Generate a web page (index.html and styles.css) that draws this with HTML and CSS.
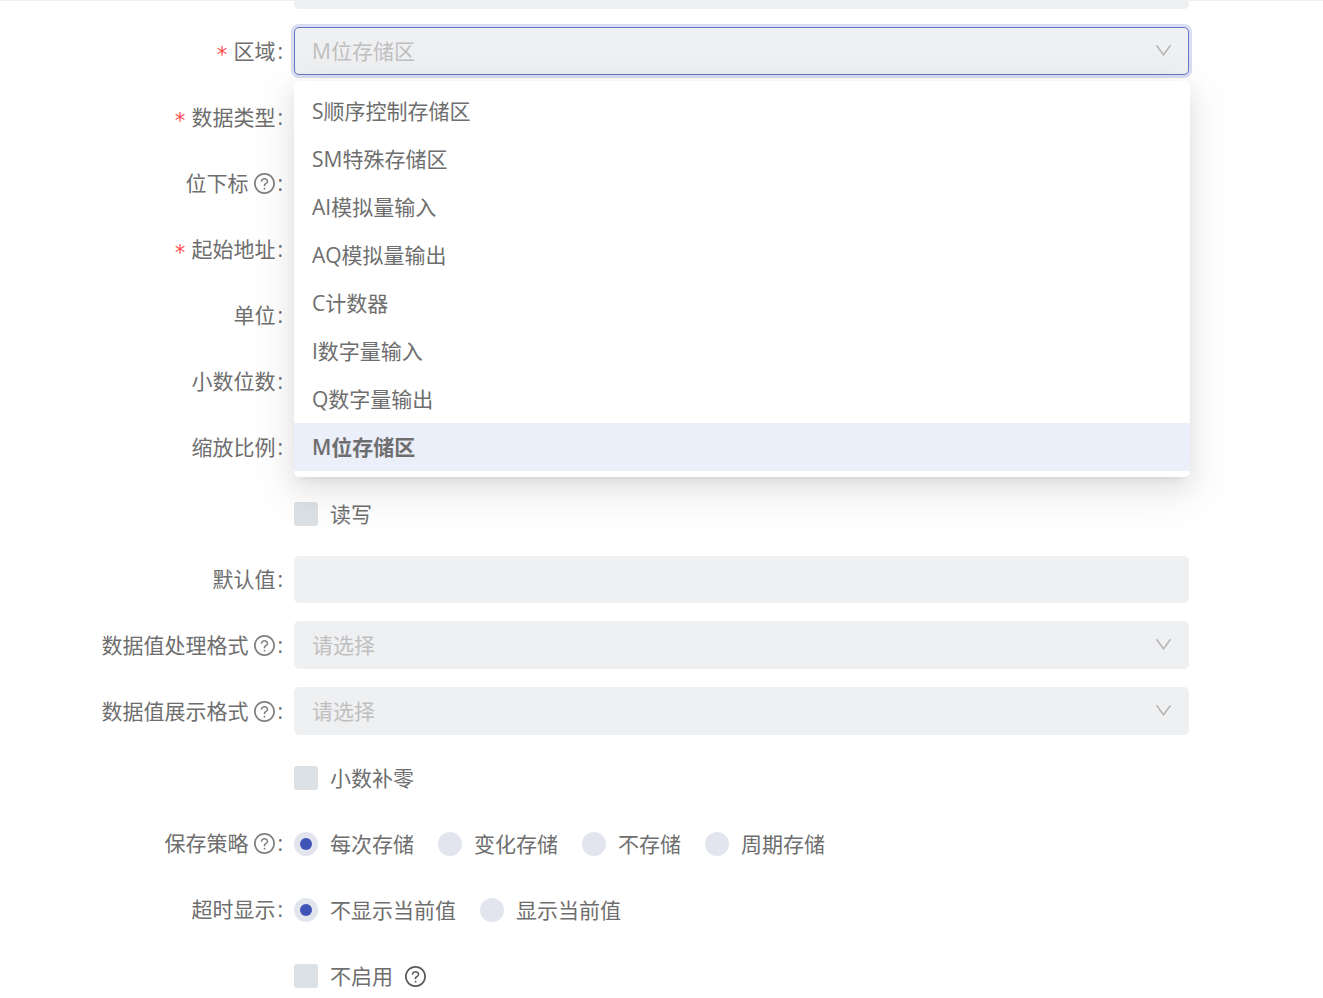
FILE: index.html
```
<!DOCTYPE html>
<html lang="zh-CN">
<head>
    <meta charset="UTF-8">
    <meta name="viewport" content="width=device-width, initial-scale=1.0">
    <title>变量配置</title>
    <link rel="stylesheet" href="styles.css">
</head>
<body>
    <!-- Общие иконки -->
    <svg class="sprite" aria-hidden="true">
        <symbol id="icon-down" viewBox="0 0 1024 1024">
            <path d="M884 256h-75c-5.100 0-9.900 2.500-12.900 6.600L512 654.200 227.900 262.600c-3-4.100-7.800-6.600-12.900-6.600h-75c-6.500 0-10.300 7.400-6.500 12.700l352.600 486.100c12.800 17.600 39 17.600 51.700 0l352.600-486.100c3.900-5.300.1-12.700-6.400-12.700z"/>
        </symbol>
        <symbol id="icon-question" viewBox="64 64 896 896">
            <path d="M512 64C264.600 64 64 264.600 64 512s200.600 448 448 448 448-200.600 448-448S759.400 64 512 64zm0 820c-205.400 0-372-166.600-372-372s166.600-372 372-372 372 166.600 372 372-166.600 372-372 372z"/>
            <path d="M623.600 316.700C593.600 290.400 554 276 512 276s-81.600 14.500-111.600 40.700C369.200 344 352 380.700 352 420v7.600c0 4.400 3.600 8 8 8h48c4.400 0 8-3.600 8-8V420c0-44.100 43.100-80 96-80s96 35.900 96 80c0 31.100-22 59.600-56.100 72.700-21.200 8.100-39.200 22.300-52.100 40.900-13.100 19-19.900 41.800-19.900 64.900V620c0 4.400 3.600 8 8 8h48c4.400 0 8-3.600 8-8v-22.700a48.300 48.300 0 0 1 30.900-44.800c59-22.700 97.100-74.700 97.100-132.500.1-39.300-17.100-76-48.300-103.300zM472 732a40 40 0 1 0 80 0 40 40 0 1 0-80 0z"/>
        </symbol>
    </svg>

    <form class="form">
        <div class="form-row form-row-cut">
            <span></span>
            <div class="field field-cut"></div>
        </div>

        <div class="form-row">
            <label class="form-label required" for="area">区域</label>
            <div class="select">
                <select class="field field-open" id="area" disabled>
                    <option>M位存储区</option>
                </select>
                <svg class="arrow"><use href="#icon-down"/></svg>
                <ul class="dropdown" role="listbox">
                    <li class="option" role="option">S顺序控制存储区</li>
                    <li class="option" role="option">SM特殊存储区</li>
                    <li class="option" role="option">AI模拟量输入</li>
                    <li class="option" role="option">AQ模拟量输出</li>
                    <li class="option" role="option">C计数器</li>
                    <li class="option" role="option">I数字量输入</li>
                    <li class="option" role="option">Q数字量输出</li>
                    <li class="option selected" role="option" aria-selected="true">M位存储区</li>
                </ul>
            </div>
        </div>

        <div class="form-row">
            <label class="form-label required" for="data-type">数据类型</label>
            <input class="field" id="data-type" type="text" disabled>
        </div>
        <div class="form-row">
            <label class="form-label" for="bit-index">位下标<svg class="help"><use href="#icon-question"/></svg></label>
            <input class="field" id="bit-index" type="text" disabled>
        </div>
        <div class="form-row">
            <label class="form-label required" for="address">起始地址</label>
            <input class="field" id="address" type="text" disabled>
        </div>
        <div class="form-row">
            <label class="form-label" for="unit">单位</label>
            <input class="field" id="unit" type="text" disabled>
        </div>
        <div class="form-row">
            <label class="form-label" for="decimals">小数位数</label>
            <input class="field" id="decimals" type="text" disabled>
        </div>
        <div class="form-row">
            <label class="form-label" for="scale">缩放比例</label>
            <input class="field" id="scale" type="text" disabled>
        </div>

        <div class="form-row">
            <span></span>
            <div class="choices">
                <label class="choice"><input class="checkbox" type="checkbox" disabled>读写</label>
            </div>
        </div>

        <div class="form-row">
            <label class="form-label" for="default-value">默认值</label>
            <input class="field" id="default-value" type="text" disabled>
        </div>

        <div class="form-row">
            <label class="form-label" for="process-format">数据值处理格式<svg class="help"><use href="#icon-question"/></svg></label>
            <div class="select">
                <select class="field" id="process-format" disabled>
                    <option>请选择</option>
                </select>
                <svg class="arrow"><use href="#icon-down"/></svg>
            </div>
        </div>
        <div class="form-row">
            <label class="form-label" for="display-format">数据值展示格式<svg class="help"><use href="#icon-question"/></svg></label>
            <div class="select">
                <select class="field" id="display-format" disabled>
                    <option>请选择</option>
                </select>
                <svg class="arrow"><use href="#icon-down"/></svg>
            </div>
        </div>

        <div class="form-row">
            <span></span>
            <div class="choices">
                <label class="choice"><input class="checkbox" type="checkbox" disabled>小数补零</label>
            </div>
        </div>

        <div class="form-row" role="radiogroup" aria-labelledby="save-label">
            <span class="form-label" id="save-label">保存策略<svg class="help"><use href="#icon-question"/></svg></span>
            <div class="choices">
                <label class="choice"><input class="radio" type="radio" name="save" checked disabled>每次存储</label>
                <label class="choice"><input class="radio" type="radio" name="save" disabled>变化存储</label>
                <label class="choice"><input class="radio" type="radio" name="save" disabled>不存储</label>
                <label class="choice"><input class="radio" type="radio" name="save" disabled>周期存储</label>
            </div>
        </div>
        <div class="form-row" role="radiogroup" aria-labelledby="timeout-label">
            <span class="form-label" id="timeout-label">超时显示</span>
            <div class="choices">
                <label class="choice"><input class="radio" type="radio" name="timeout" checked disabled>不显示当前值</label>
                <label class="choice"><input class="radio" type="radio" name="timeout" disabled>显示当前值</label>
            </div>
        </div>

        <div class="form-row">
            <span></span>
            <div class="choices">
                <label class="choice"><input class="checkbox" type="checkbox" disabled>不启用<svg class="help help-dark"><use href="#icon-question"/></svg></label>
            </div>
        </div>
    </form>
</body>
</html>
```
FILE: styles.css
```
* {
    box-sizing: border-box;
}
body {
    margin: 0;
    background: #fff;
    color: #6e6e6e;
    font-family: "Open Sans", "Noto Sans CJK SC", sans-serif;
    font-size: 21px;
    line-height: 32px;
    overflow: hidden;
}
.sprite {
    display: none;
}
.form {
    display: flex;
    flex-direction: column;
    gap: 18px;
    border-top: 1px solid #f0f0f0;
}
.form-row {
    display: grid;
    grid-template-columns: 294px 1fr;
    align-items: center;
    min-height: 48px;
    padding-right: 134px;
}
.form-row-cut {
    min-height: 0;
}

/* Подписи */
.form-label {
    display: flex;
    justify-content: flex-end;
    align-items: center;
}
.form-label::after {
    content: ":";
    margin: 0 11px 0 2px;
}
.required::before {
    content: "*";
    margin-right: 5px;
    padding-top: 8px;
    color: #ff4d4f;
    font-family: "DejaVu Sans Mono", monospace;
    line-height: 1;
}
.help {
    width: 21px;
    height: 21px;
    margin-left: 6px;
    fill: #808080;
}
.help-dark {
    margin-left: 12px;
    fill: #595959;
}

/* Поля ввода и списки */
.field {
    display: block;
    width: 100%;
    height: 48px;
    padding: 0 17px;
    border: 1px solid #eff0f2;
    border-radius: 5px;
    background: #eff0f2;
    color: #bfbfbf;
    font: inherit;
    opacity: 1;
    appearance: none;
}
input.field {
    height: 47px;
}
.field-cut {
    height: 8px;
    border-radius: 0 0 5px 5px;
}
.field-open {
    border-color: #6277c7;
    box-shadow: 0 0 0 3px #d9ddf0;
}
.select {
    position: relative;
}
.arrow {
    position: absolute;
    top: 13px;
    right: 15px;
    width: 21px;
    height: 21px;
    fill: #b5b5b5;
    pointer-events: none;
}

/* Выпадающий список */
.dropdown {
    position: absolute;
    z-index: 10;
    top: 54px;
    left: 0;
    right: -1px;
    margin: 0;
    padding: 6px 0;
    border-radius: 5px;
    background: #fff;
    box-shadow: 0 5px 9px -6px rgba(0, 0, 0, 0.12),
        0 9px 24px 0 rgba(0, 0, 0, 0.08),
        0 14px 42px 12px rgba(0, 0, 0, 0.05);
    list-style: none;
}
.option {
    padding: 8px 18px;
}
.selected {
    background: #ebeffa;
    font-weight: 600;
}

/* Флажки и переключатели */
.choices {
    display: flex;
    flex-wrap: wrap;
    gap: 24px;
    padding-top: 2px;
}
.choice {
    display: flex;
    align-items: center;
}
.checkbox, .radio {
    display: grid;
    place-items: center;
    width: 24px;
    height: 24px;
    margin: 0 12px 0 0;
    appearance: none;
}
.checkbox {
    border-radius: 3px;
    background: #dce1e5;
}
.radio {
    border-radius: 50%;
    background: #e2e5ed;
}
.radio:checked::before {
    content: "";
    width: 12px;
    height: 12px;
    border-radius: 50%;
    background: #4054b8;
}
```
